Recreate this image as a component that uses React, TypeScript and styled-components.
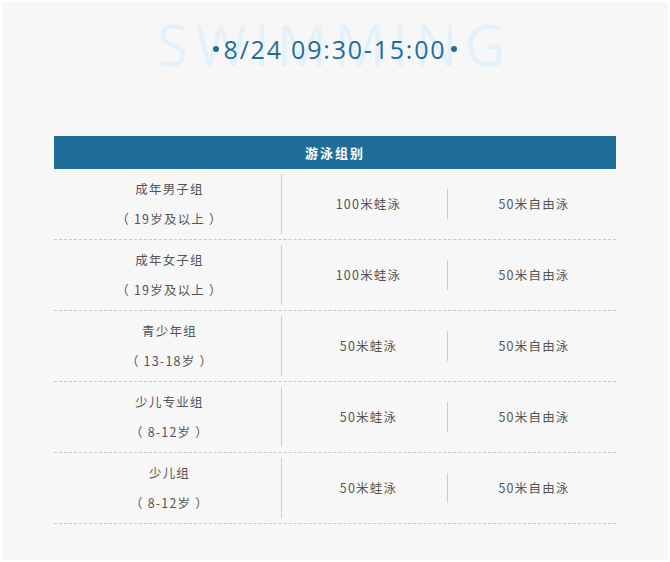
import React from "react";
import styled, { createGlobalStyle } from "styled-components";

const Global = createGlobalStyle`
  html, body { margin: 0; padding: 0; background: #ffffff; }
  * { box-sizing: border-box; }
`;

const Panel = styled.div`
  margin: 2px;
  height: 558px;
  background: #f7f7f7;
  padding-top: 6px;
  font-family: "Noto Sans CJK SC", "Noto Sans", sans-serif;
`;

const TitleStack = styled.div`
  display: grid;
  justify-items: center;
  align-items: center;
  height: 72px;
`;

const Watermark = styled.div`
  grid-area: 1 / 1;
  font-family: "Open Sans", sans-serif;
  font-size: 56px;
  letter-spacing: 7.3px;
  color: #e3f1fa;
  line-height: 1;
`;

const DateLine = styled.div`
  grid-area: 1 / 1;
  display: flex;
  align-items: center;
  gap: 5px;
  font-family: "Open Sans", sans-serif;
  font-size: 25px;
  letter-spacing: 1.8px;
  color: #1f6e99;
  margin-top: 10px;
`;

const Dot = styled.span`
  width: 6px;
  height: 6px;
  border-radius: 50%;
  background: #1f6e99;
`;

const Table = styled.div`
  margin: 56px 52px 0 52px;
`;

const Header = styled.div`
  height: 33px;
  background: #1f6e99;
  color: #ffffff;
  font-weight: bold;
  font-size: 13px;
  letter-spacing: 2px;
  display: flex;
  align-items: center;
  justify-content: center;
`;

const Row = styled.div`
  display: grid;
  grid-template-columns: 228px 165px 1fr;
  align-items: center;
  padding: 5px 0;
  border-bottom: 1px dashed #c9c9c9;
  color: #555555;
  font-size: 12.5px;
  letter-spacing: 1.2px;
`;

const GroupCell = styled.div`
  border-right: 1px solid #cccccc;
  text-align: center;
  line-height: 30px;
  padding-left: 4px;
`;

const EventCell = styled.div<{ $divided?: boolean }>`
  text-align: center;
  line-height: 30px;
  padding-left: ${(p) => (p.$divided ? "4px" : "8px")};
  border-left: ${(p) => (p.$divided ? "1px solid #cccccc" : "none")};
`;

const rows = [
  { name: "成年男子组", age: "（ 19岁及以上 ）", a: "100米蛙泳", b: "50米自由泳" },
  { name: "成年女子组", age: "（ 19岁及以上 ）", a: "100米蛙泳", b: "50米自由泳" },
  { name: "青少年组", age: "（ 13-18岁 ）", a: "50米蛙泳", b: "50米自由泳" },
  { name: "少儿专业组", age: "（ 8-12岁 ）", a: "50米蛙泳", b: "50米自由泳" },
  { name: "少儿组", age: "（ 8-12岁 ）", a: "50米蛙泳", b: "50米自由泳" },
];

export default function App() {
  return (
    <Panel>
      <Global />
      <TitleStack>
        <Watermark>SWIMMING</Watermark>
        <DateLine>
          <Dot />
          8/24 09:30-15:00
          <Dot />
        </DateLine>
      </TitleStack>
      <Table>
        <Header>游泳组别</Header>
        {rows.map((r, i) => (
          <Row key={i}>
            <GroupCell>
              <div>{r.name}</div>
              <div>{r.age}</div>
            </GroupCell>
            <EventCell>{r.a}</EventCell>
            <EventCell $divided>{r.b}</EventCell>
          </Row>
        ))}
      </Table>
    </Panel>
  );
}
